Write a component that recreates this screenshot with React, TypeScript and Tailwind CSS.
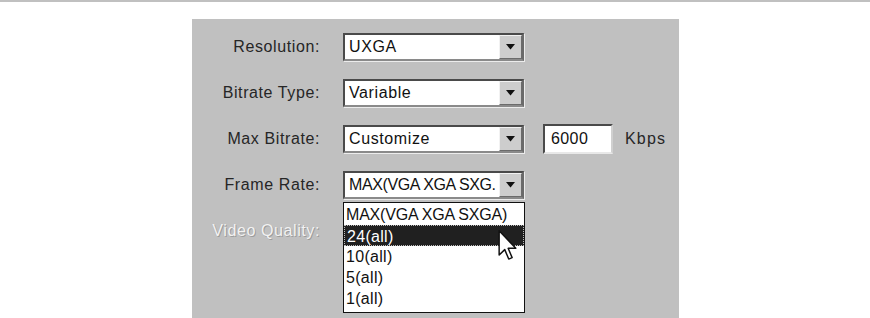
import React from "react";

const font = { fontFamily: '"Liberation Sans", Arial, sans-serif' };

const Arrow = () => (
  <div className="flex h-full w-[23px] shrink-0 items-center justify-center border-t border-l border-t-[#f2f2f2] border-l-[#f2f2f2] border-r border-b border-r-[#6b6b6b] border-b-[#6b6b6b] bg-[#cdcdcd]">
    <svg width="9" height="6" viewBox="0 0 9 6">
      <path d="M0 0 H9 L4.5 5.5 Z" fill="#111" />
    </svg>
  </div>
);

const Select = ({ value, tight }: { value: string; tight?: boolean }) => (
  <div className="flex h-[28px] w-[181px] border-2 border-t-[#4a4a4a] border-l-[#4a4a4a] border-r-[#6a6a6a] border-b-[#8a8a8a] bg-white shadow-[1px_1px_0_#ececec]">
    <div
      className={
        "flex-1 overflow-hidden whitespace-nowrap pl-[4px] text-[16px] leading-[24px] text-[#111] " +
        (tight ? "tracking-[-0.4px]" : "tracking-[0.6px]")
      }
    >
      {value}
    </div>
    <Arrow />
  </div>
);

const Label = ({ children, disabled }: { children: React.ReactNode; disabled?: boolean }) => (
  <div
    className={
      "w-[128px] text-right text-[16px] tracking-[0.6px] " +
      (disabled
        ? "text-[#f2f2f2] [text-shadow:1px_1px_0_#9c9c9c,-0.5px_-0.5px_0_#b4b4b4]"
        : "text-[#262626]")
    }
  >
    {children}
  </div>
);

const Cursor = () => (
  <svg className="absolute left-[154px] top-[27px]" width="20" height="31" viewBox="0 0 13 21">
    <path
      d="M0.5 0.5 L0.5 17 L4.3 13.3 L7 19.7 L9.3 18.7 L6.6 12.4 L11.8 12.4 Z"
      fill="#fff"
      stroke="#111"
      strokeWidth="1"
      strokeLinejoin="round"
    />
  </svg>
);

export default function App() {
  const options = ["MAX(VGA XGA SXGA)", "24(all)", "10(all)", "5(all)", "1(all)"];

  return (
    <div className="h-[318px] w-[870px] overflow-hidden border-t-2 border-[#c0c0c0] bg-white" style={font}>
      <div className="ml-[192px] mt-[17px] h-[299px] w-[487px] bg-[#c0c0c0] pt-[14px]">
        <div className="flex flex-col gap-[18px]">
          <div className="flex h-[28px] items-center gap-[23px]">
            <Label>Resolution:</Label>
            <Select value="UXGA" />
          </div>
          <div className="flex h-[28px] items-center gap-[23px]">
            <Label>Bitrate Type:</Label>
            <Select value="Variable" />
          </div>
          <div className="flex h-[28px] items-center gap-[23px]">
            <Label>Max Bitrate:</Label>
            <Select value="Customize" />
            <div className="ml-[-4px] flex h-[30px] w-[70px] items-center border-2 border-t-[#4a4a4a] border-l-[#4a4a4a] border-r-[#d0d0d0] border-b-[#e8e8e8] bg-white pl-[6px] text-[16px] tracking-[0.4px] text-[#111]">
              6000
            </div>
            <div className="ml-[-11px] text-[16px] tracking-[1.2px] text-[#262626]">Kbps</div>
          </div>
          <div className="flex h-[28px] items-center gap-[23px]">
            <Label>Frame Rate:</Label>
            <div className="relative">
              <Select value="MAX(VGA XGA SXG." tight />
              <div className="absolute left-0 top-[31px] z-10 w-[182px] border border-[#111] bg-white pt-[1px] pb-[3px]">
                {options.map((o, i) => (
                  <div
                    key={o}
                    className={
                      "h-[21px] whitespace-nowrap pl-[2px] text-[16px] leading-[21px] " +
                      (i === 0 ? "tracking-[-0.2px] " : "tracking-[0.3px] ") +
                      (i === 1
                        ? "border border-dotted border-[#bbb] bg-[#202020] pl-[1px] leading-[19px] text-white"
                        : "text-[#111]")
                    }
                  >
                    {o}
                  </div>
                ))}
                <Cursor />
              </div>
            </div>
          </div>
          <div className="flex h-[28px] items-center gap-[23px]">
            <Label disabled>Video Quality:</Label>
          </div>
        </div>
      </div>
    </div>
  );
}
